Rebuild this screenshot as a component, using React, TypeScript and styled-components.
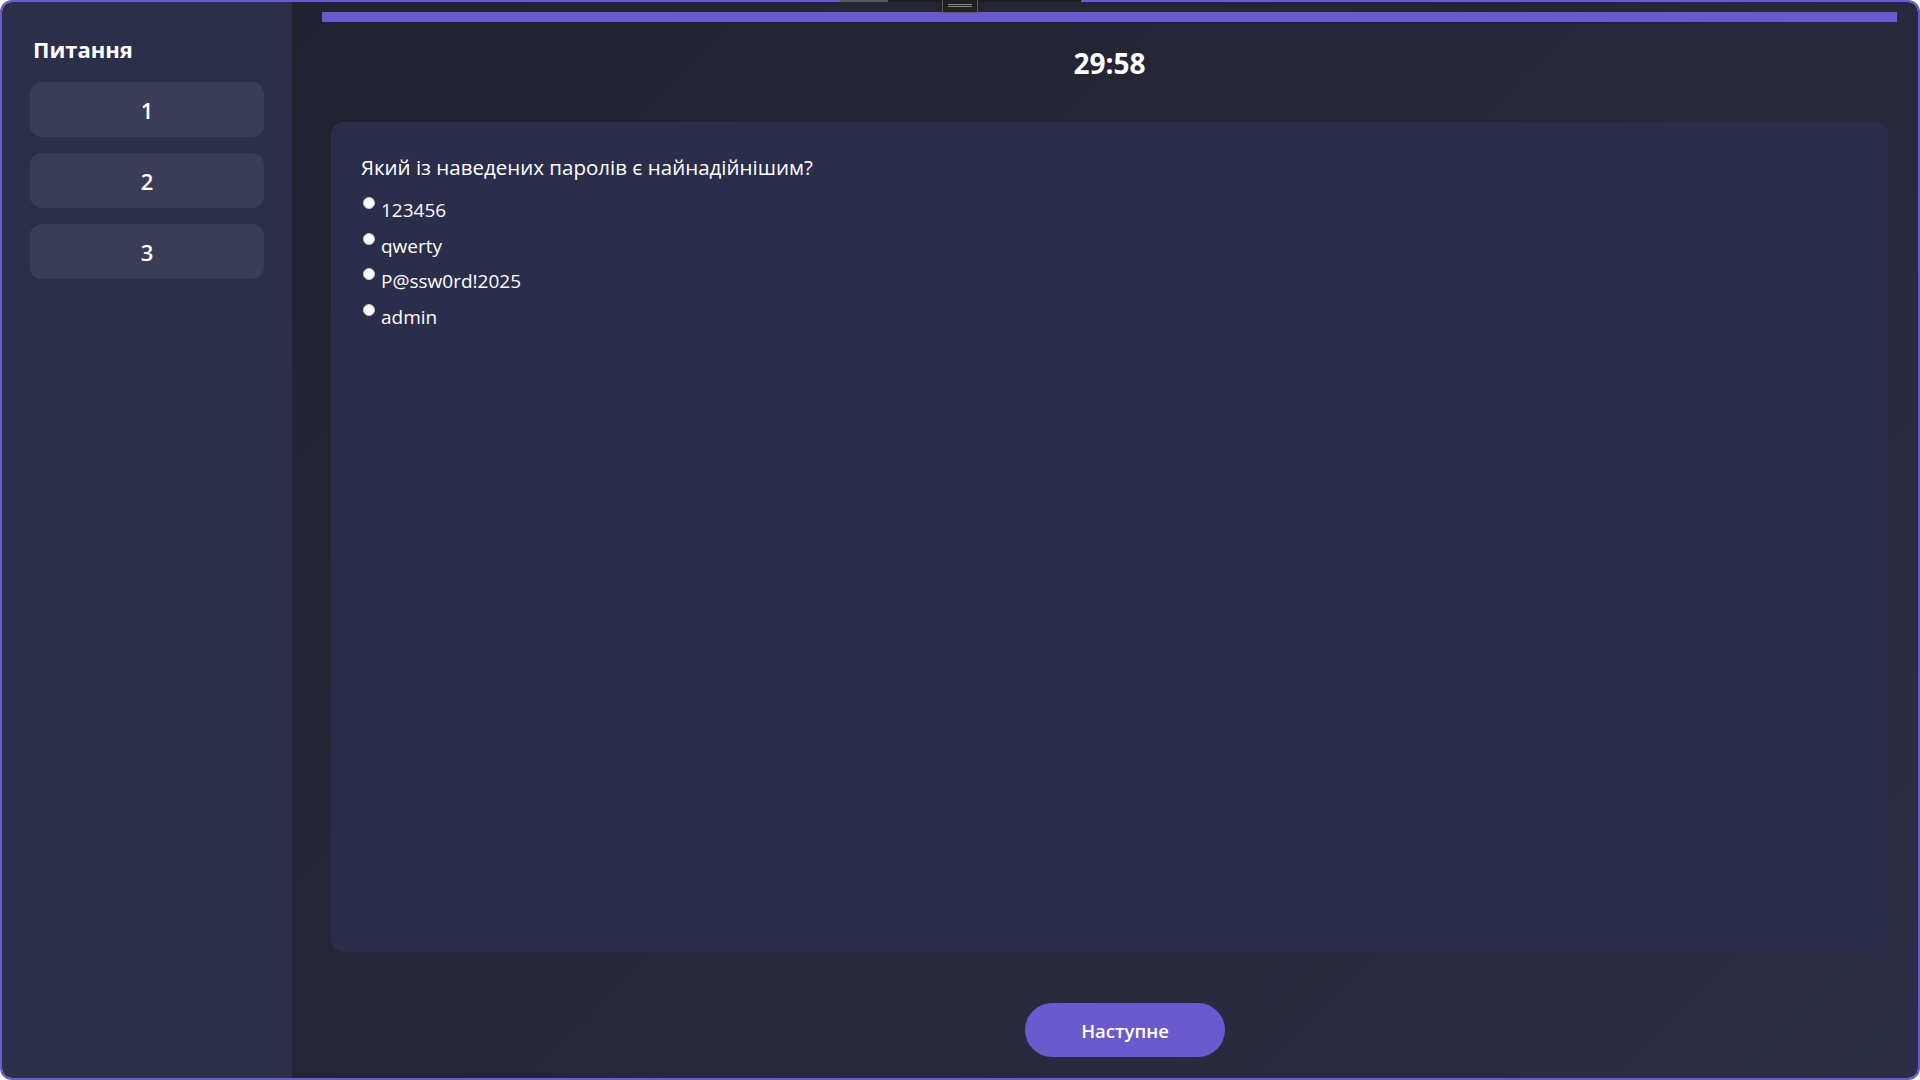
import React from "react";
import styled, { createGlobalStyle } from "styled-components";

const GlobalStyle = createGlobalStyle`
  html, body { margin: 0; padding: 0; background: #ffffff; }
  body { font-family: "Open Sans", "Noto Sans", "Liberation Sans", sans-serif; }
  * { box-sizing: border-box; }
`;

const Window = styled.div`
  width: 100vw;
  height: 100vh;
  border: 2px solid #6a5acd;
  border-radius: 12px;
  overflow: hidden;
  display: flex;
  color: #ffffff;
  font-family: "Open Sans", "Noto Sans", "Liberation Sans", sans-serif;
`;

const Sidebar = styled.aside`
  width: 290px;
  flex: 0 0 290px;
  background: #2c2f4a;
  padding: 31px 28px 0;
  display: flex;
  flex-direction: column;
  gap: 16px;
`;

const SidebarTitle = styled.h2`
  margin: 0 0 1px 3px;
  font-size: 22px;
  line-height: 32px;
  font-weight: 700;
`;

const QuestionButton = styled.button`
  height: 55px;
  border: none;
  border-radius: 12px;
  background: #3b3d58;
  color: #ffffff;
  font-family: inherit;
  font-size: 22px;
  font-weight: 600;
  display: flex;
  align-items: center;
  justify-content: center;
  cursor: pointer;
`;

const Main = styled.main`
  flex: 1;
  display: flex;
  flex-direction: column;
  padding: 10px 21px 0 30px;
  background: linear-gradient(135deg, #212130 0%, #26273a 50%, #2c2e45 100%);
`;

const ProgressTrack = styled.div`
  height: 10px;
  background: #3a3b55;
`;

const ProgressFill = styled.div`
  height: 100%;
  background: #6a5acd;
`;

const Timer = styled.div`
  margin-top: 22px;
  text-align: center;
  font-size: 28px;
  line-height: 38px;
  font-weight: 700;
`;

const Card = styled.section`
  flex: 1;
  margin: 40px 9px 0;
  padding: 32px 30px;
  background: #2b2e4b;
  border-radius: 12px;
  display: flex;
  flex-direction: column;
`;

const QuestionText = styled.p`
  margin: 0 0 17px;
  font-size: 20.5px;
  line-height: 27px;
`;

const Options = styled.div`
  display: flex;
  flex-direction: column;
  gap: 11.5px;
  padding-left: 2px;
`;

const OptionRow = styled.label`
  display: flex;
  align-items: flex-start;
  gap: 6px;
  font-size: 19px;
  line-height: 24px;
  cursor: pointer;
`;

const Radio = styled.input`
  appearance: none;
  -webkit-appearance: none;
  margin: -1px 0 0 0;
  width: 12px;
  height: 12px;
  flex: 0 0 12px;
  border-radius: 50%;
  background: #ffffff;
  border: 1px solid #c8c8cc;
`;

const Footer = styled.div`
  display: flex;
  justify-content: center;
  padding: 51px 0 21px 31px;
`;

const NextButton = styled.button`
  width: 200px;
  height: 54px;
  border: none;
  border-radius: 27px;
  background: #6a5acd;
  color: #ffffff;
  font-family: inherit;
  font-size: 18.5px;
  font-weight: 600;
  cursor: pointer;
`;

const SnapBar = styled.div`
  position: fixed;
  top: 0;
  left: 840px;
  width: 241px;
  height: 2px;
  background: linear-gradient(90deg, #5a5a5e 0, #5a5a5e 48px, #1e1e20 48px);
`;

const SnapHandle = styled.div`
  position: fixed;
  top: 0;
  left: 942px;
  width: 36px;
  height: 13px;
  background: #202022;
  border: 1px solid #5a5a5a;
  border-top: none;
  display: flex;
  flex-direction: column;
  align-items: center;
  padding-top: 4px;
  gap: 1px;
`;

const SnapLine = styled.span`
  width: 24px;
  height: 1px;
  background: #8a8a8a;
`;

const options = ["123456", "qwerty", "P@ssw0rd!2025", "admin"];

export default function App() {
  return (
    <>
      <GlobalStyle />
      <Window>
        <Sidebar>
          <SidebarTitle>Питання</SidebarTitle>
          {[1, 2, 3].map((n) => (
            <QuestionButton key={n}>{n}</QuestionButton>
          ))}
        </Sidebar>
        <Main>
          <ProgressTrack>
            <ProgressFill style={{ width: "100%" }} />
          </ProgressTrack>
          <Timer>29:58</Timer>
          <Card>
            <QuestionText>Який із наведених паролів є найнадійнішим?</QuestionText>
            <Options>
              {options.map((o) => (
                <OptionRow key={o}>
                  <Radio type="radio" name="answer" value={o} />
                  <span>{o}</span>
                </OptionRow>
              ))}
            </Options>
          </Card>
          <Footer>
            <NextButton>Наступне</NextButton>
          </Footer>
        </Main>
      </Window>
      <SnapBar />
      <SnapHandle>
        <SnapLine />
        <SnapLine />
      </SnapHandle>
    </>
  );
}
